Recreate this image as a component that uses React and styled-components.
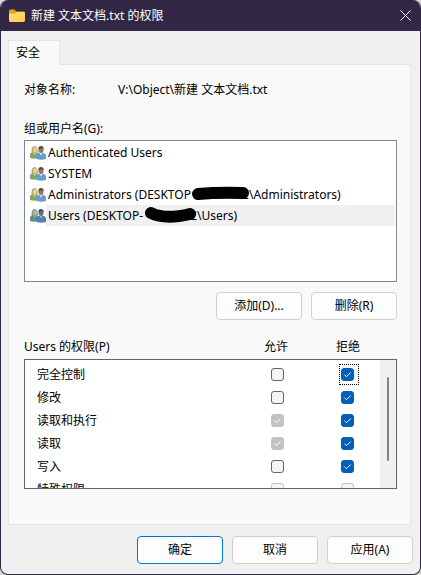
import React, { useState } from "react";
import styled, { createGlobalStyle } from "styled-components";

const GlobalStyle = createGlobalStyle`
  * {
    box-sizing: border-box;
  }

  body {
    margin: 0;
    background: #d9d9d9;
    color: #000;
    font-family: "Noto Sans", "Noto Sans CJK SC", sans-serif;
    font-size: 12px;
    line-height: 16px;
  }

  button {
    font: inherit;
    color: inherit;
  }
`;

const Window = styled.main`
  display: flex;
  flex-direction: column;
  min-height: 100vh;
  border: 1px solid #322846;
  border-top: 0;
  border-radius: 8px;
  background: #f0f0f0;
  overflow: hidden;
`;

const TitleBar = styled.header`
  display: flex;
  align-items: center;
  gap: 5px;
  height: 31px;
  padding: 0 8px;
  background: #322846;
  color: #fff;
`;

const Title = styled.h1`
  flex: 1;
  margin: 0;
  font-size: 12px;
  font-weight: 400;
`;

const CloseButton = styled.button`
  display: flex;
  padding: 1px;
  border: 0;
  background: none;
  color: #fff;
`;

const Tabs = styled.div`
  display: flex;
  padding: 9px 7px 0;
`;

const Tab = styled.button`
  height: 25px;
  margin-bottom: -1px;
  padding: 0 19px 0 7px;
  border: 1px solid #e5e5e5;
  border-bottom: 0;
  background: #f9f9f9;
  z-index: 1;
`;

const Panel = styled.section`
  flex: 1;
  margin: 0 9px 0 7px;
  padding: 17px 13px 35px 15px;
  border: 1px solid #e5e5e5;
  background: #f9f9f9;
`;

const ObjectRow = styled.div`
  display: flex;
  margin-bottom: 23px;
`;

const ObjectLabel = styled.span`
  width: 94px;
`;

const ListLabel = styled.div`
  margin-bottom: 3px;
`;

const UserList = styled.ul`
  height: 142px;
  margin: 0;
  padding: 1px;
  border: 1px solid #828790;
  background: #fff;
  list-style: none;
`;

const UserRow = styled.li`
  display: flex;
  height: 21px;
  padding-left: 4px;
  align-items: center;
`;

const UserName = styled.span`
  flex: 1;
  padding: 0 2px;
  line-height: 21px;
  white-space: nowrap;
  background: ${(props) => (props.$selected ? "#f0f0f0" : "transparent")};
`;

const Redacted = styled.span`
  position: relative;
  display: inline-block;
  width: ${(props) => props.$width}px;
  text-align: right;

  svg {
    position: absolute;
    left: 0;
    top: 0;
  }
`;

const Buttons = styled.div`
  display: flex;
  justify-content: flex-end;
  gap: 9px;
  padding: ${(props) => (props.$footer ? "11px 7px 10px" : "10px 0 19px")};
`;

const Button = styled.button`
  width: 86px;
  height: 28px;
  padding: 0;
  border: 1px solid ${(props) => (props.$primary ? "#0078d4" : "#d0d0d0")};
  border-radius: 4px;
  background: #fdfdfd;
`;

const PermissionHead = styled.div`
  display: grid;
  grid-template-columns: 1fr 72px 72px 12px;
  padding-right: 1px;
  margin-bottom: 4px;
`;

const HeadCell = styled.span`
  text-align: center;
`;

const PermissionBox = styled.div`
  display: flex;
  height: 130px;
  border: 1px solid #646464;
  background: #fff;
  overflow: hidden;
`;

const PermissionTable = styled.table`
  flex: 1;
  align-self: flex-start;
  margin-top: 3px;
  border-collapse: collapse;
  table-layout: fixed;
`;

const NameCell = styled.th`
  height: 23px;
  padding: 0 0 0 12px;
  font-weight: 400;
  text-align: left;
`;

const CheckCell = styled.td`
  width: 70px;
  height: 23px;
  padding: 0;
`;

const CheckFrame = styled.label`
  display: flex;
  align-items: center;
  width: 20px;
  height: 21px;
  margin-left: 29px;
  padding-left: 1px;
  border: 1px dotted ${(props) => (props.$focused ? "#000" : "transparent")};
`;

const Checkbox = styled.input`
  appearance: none;
  width: 13px;
  height: 13px;
  margin: 0;
  border: 1px solid #646464;
  border-radius: 3px;
  background: #f5f5f5;

  &:checked {
    border-color: #005fb8;
    background: #005fb8
      url("data:image/svg+xml,%3Csvg xmlns='http://www.w3.org/2000/svg' viewBox='0 0 11 11'%3E%3Cpath d='M2.5 5.7 4.5 7.7 8.7 3.5' fill='none' stroke='%23fff'/%3E%3C/svg%3E");
  }

  &:disabled {
    border-color: #c3c3c3;
  }

  &:disabled:checked {
    background-color: #c3c3c3;
  }
`;

const ScrollTrack = styled.div`
  width: 16px;
  padding: 17px 7px;
  background: #f0f0f0;
`;

const ScrollThumb = styled.div`
  width: 2px;
  height: 84px;
  border-radius: 1px;
  background: #858585;
`;

const FolderIcon = () => (
  <svg width="17" height="14" viewBox="0 0 17 14" aria-hidden="true">
    <defs>
      <linearGradient id="folder" x1="0" y1="0" x2="1" y2="1">
        <stop offset="0" stopColor="#ffe28a" />
        <stop offset="1" stopColor="#ffc83a" />
      </linearGradient>
    </defs>
    <path d="M0 2a1.5 1.5 0 0 1 1.5-1.5h4L7.5 2.5H14.5A1.5 1.5 0 0 1 16 4v5H0z" fill="#e8a30c" />
    <path d="M0 5.5a1 1 0 0 1 1-1h5.5l1.5-1.5h7a1 1 0 0 1 1 1v7.5a1.5 1.5 0 0 1-1.5 1.5h-13A1.5 1.5 0 0 1 0 11.5z" fill="url(#folder)" />
  </svg>
);

const CloseIcon = () => (
  <svg width="11" height="11" viewBox="0 0 11 11" aria-hidden="true">
    <path d="M.5.5l10 10M10.5.5l-10 10" stroke="currentColor" />
  </svg>
);

const GroupIcon = ({ selected }) => (
  <svg width="16" height="16" viewBox="0 0 16 16" aria-hidden="true">
    <path d="M0 13V10q0-2.5 3-3h3q3 .5 3 3v3q-4.5 1.5-9 0z" fill={selected ? "#5f9080" : "#80a862"} />
    <path d="M3 7.5h3L4.8 10z" fill={selected ? "#a3b5b4" : "#e4d7b4"} />
    <path d="M1.5 7Q1.2 1 4.5 1T8 7.2L6.5 8h-4z" fill={selected ? "#879a83" : "#b9ab70"} />
    <ellipse cx="5" cy="4.8" rx="2" ry="2.6" fill={selected ? "#a9b9b4" : "#e3d0a6"} />
    <path d="M6.5 14v-3q0-2.5 3-3.2h3.5q3 .7 3 3.2v3q-5 1.5-9.5 0z" fill={selected ? "#4c83bd" : "#669dd2"} />
    <path d="M9.5 8h3L11 10.5z" fill={selected ? "#9cb9d6" : "#dce9f5"} />
    <ellipse cx="11" cy="4.8" rx="2.5" ry="3.3" fill={selected ? "#6e7279" : "#9c7656"} />
    <path d="M8.5 4.5Q8 1 11 1t2.7 3.5L12.5 3z" fill={selected ? "#40566e" : "#5f4c3d"} />
  </svg>
);

const users = [
  { name: "Authenticated Users" },
  { name: "SYSTEM" },
  {
    name: "Administrators (DESKTOP",
    rest: "\\Administrators)",
    width: 58,
    mark: "M7 10Q28 8 52 9",
  },
  {
    name: "Users (DESKTOP-",
    rest: "\\Users)",
    width: 54,
    mark: "M8 8Q22 15 47 9",
    selected: true,
  },
];

const initialPermissions = [
  { name: "完全控制", allow: false, deny: true },
  { name: "修改", allow: false, deny: true },
  { name: "读取和执行", allow: true, deny: true, inherited: true },
  { name: "读取", allow: true, deny: true, inherited: true },
  { name: "写入", allow: false, deny: true },
  { name: "特殊权限", allow: false, deny: false, inherited: true, locked: true },
];

const App = () => {
  const [permissions, setPermissions] = useState(initialPermissions);

  const toggle = (index, key) => {
    setPermissions(
      permissions.map((item, i) =>
        i === index ? { ...item, [key]: !item[key] } : item
      )
    );
  };

  return (
    <>
      <GlobalStyle />
      <Window>
        <TitleBar>
          <FolderIcon />
          <Title>新建 文本文档.txt 的权限</Title>
          <CloseButton aria-label="关闭">
            <CloseIcon />
          </CloseButton>
        </TitleBar>
        <Tabs role="tablist">
          <Tab role="tab" aria-selected="true">
            安全
          </Tab>
        </Tabs>
        <Panel>
          <ObjectRow>
            <ObjectLabel>对象名称:</ObjectLabel>
            <span>V:\Object\新建 文本文档.txt</span>
          </ObjectRow>
          <ListLabel id="users-label">组或用户名(G):</ListLabel>
          <UserList aria-labelledby="users-label">
            {users.map((user) => (
              <UserRow key={user.name}>
                <GroupIcon selected={user.selected} />
                <UserName $selected={user.selected}>
                  {user.name}
                  {user.mark && (
                    <Redacted $width={user.width}>
                      2
                      <svg width={user.width} height="21" aria-hidden="true">
                        <path d={user.mark} fill="none" stroke="#000" strokeWidth="12" strokeLinecap="round" />
                      </svg>
                    </Redacted>
                  )}
                  {user.rest}
                </UserName>
              </UserRow>
            ))}
          </UserList>
          <Buttons>
            <Button>添加(D)...</Button>
            <Button>删除(R)</Button>
          </Buttons>
          <PermissionHead>
            <span>Users 的权限(P)</span>
            <HeadCell>允许</HeadCell>
            <HeadCell>拒绝</HeadCell>
          </PermissionHead>
          <PermissionBox>
            <PermissionTable>
              <tbody>
                {permissions.map((item, index) => (
                  <tr key={item.name}>
                    <NameCell scope="row">{item.name}</NameCell>
                    <CheckCell>
                      <CheckFrame>
                        <Checkbox
                          type="checkbox"
                          aria-label={`${item.name} 允许`}
                          checked={item.allow}
                          disabled={item.inherited}
                          onChange={() => toggle(index, "allow")}
                        />
                      </CheckFrame>
                    </CheckCell>
                    <CheckCell>
                      <CheckFrame $focused={index === 0}>
                        <Checkbox
                          type="checkbox"
                          aria-label={`${item.name} 拒绝`}
                          checked={item.deny}
                          disabled={item.locked}
                          onChange={() => toggle(index, "deny")}
                        />
                      </CheckFrame>
                    </CheckCell>
                  </tr>
                ))}
              </tbody>
            </PermissionTable>
            <ScrollTrack>
              <ScrollThumb />
            </ScrollTrack>
          </PermissionBox>
        </Panel>
        <Buttons $footer>
          <Button $primary>确定</Button>
          <Button>取消</Button>
          <Button>应用(A)</Button>
        </Buttons>
      </Window>
    </>
  );
};

export default App;
